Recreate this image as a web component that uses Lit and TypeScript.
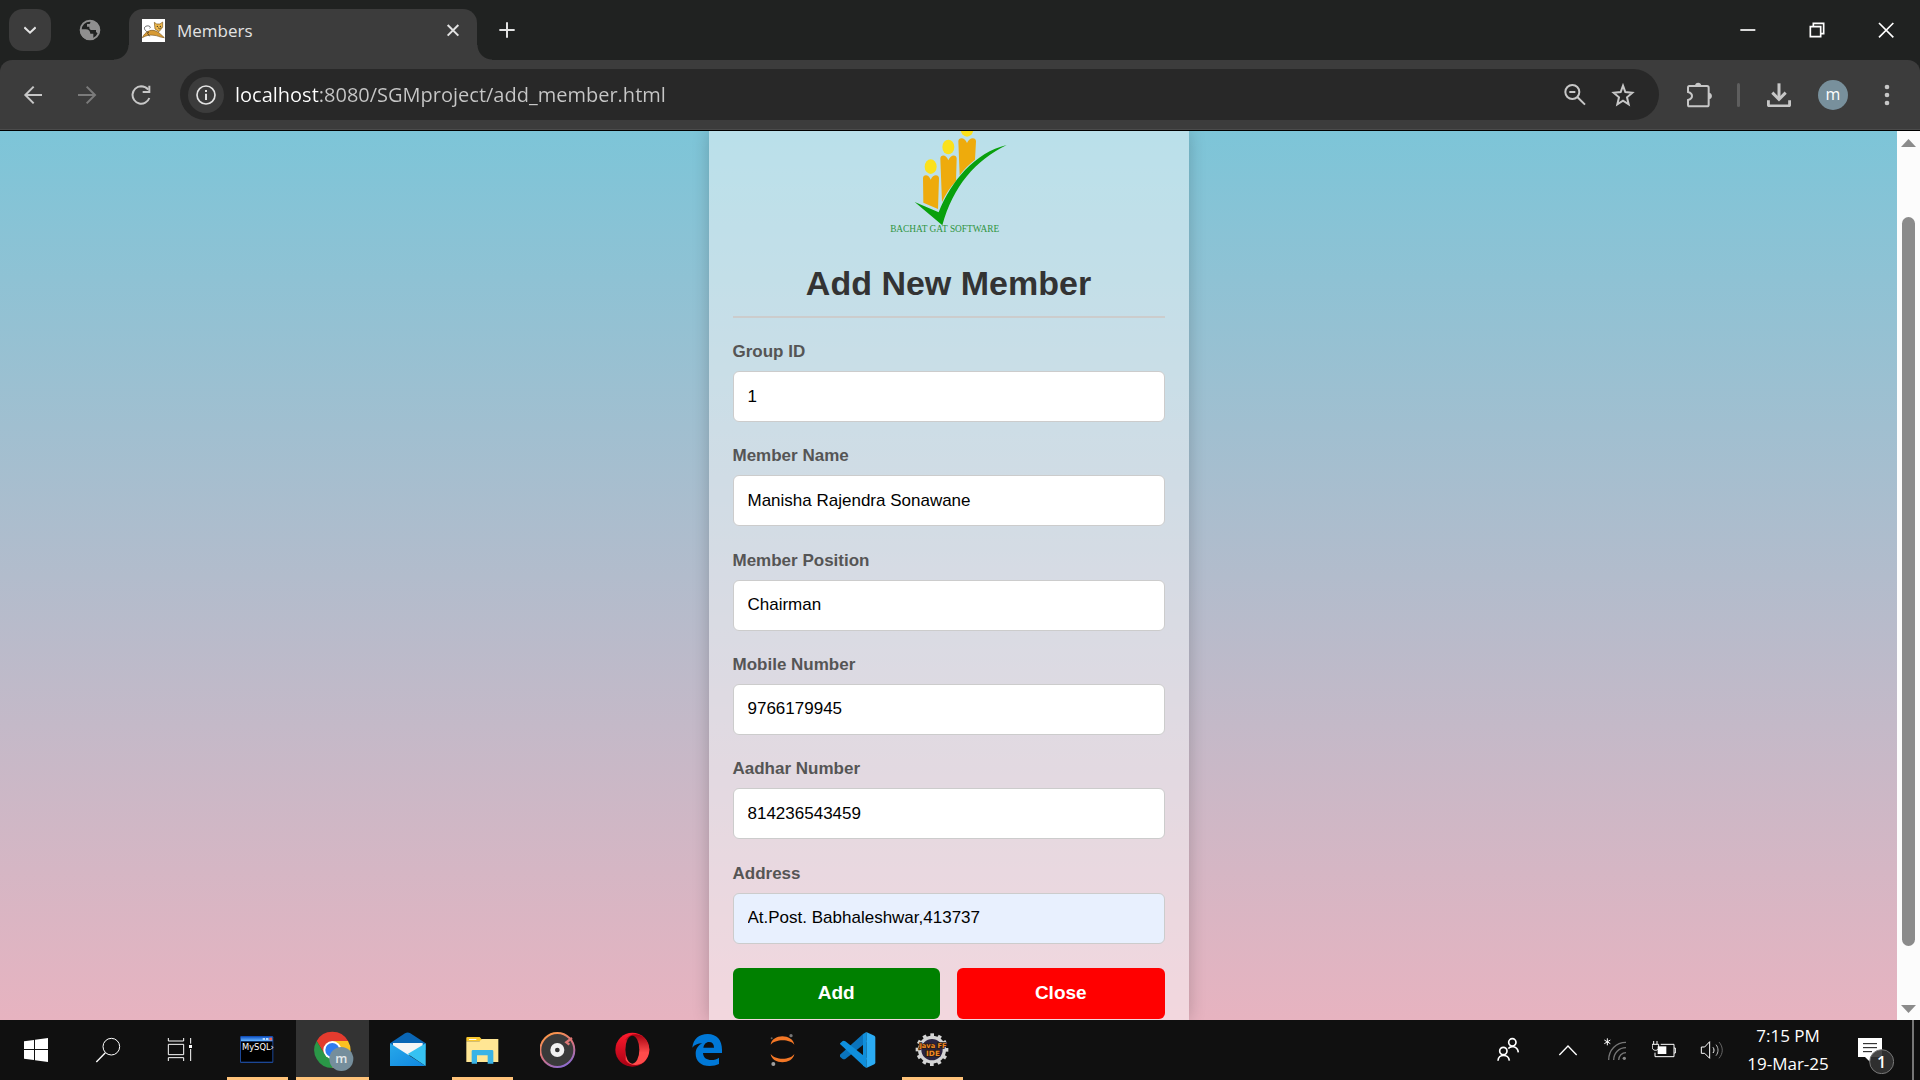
import { LitElement, html, css, svg, nothing, TemplateResult, SVGTemplateResult } from "lit";
import { customElement, state } from "lit/decorators.js";

/** Icons are drawn on a grid with three units to the pixel. */
const icon = (x: number, y: number, w: number, h: number, body: SVGTemplateResult) => html`
  <svg class="icon" width=${w} height=${h} viewBox="${x} ${y} ${w * 3} ${h * 3}" aria-hidden="true">${body}</svg>
`;

const line = (d: string, width = 5) =>
  svg`<path d=${d} fill="none" stroke="currentColor" stroke-width=${width} />`;

const chrome = {
  search: icon(72, 72, 12, 12, line("M73 82L90 98L107 82", 6)),
  globe: icon(228, 57, 22, 22, svg`
    <circle cx="261" cy="90" r="28" fill="none" stroke="currentColor" stroke-width="6" />
    <path fill="currentColor" d="M231 88H248C257 88 262 94 262 101H271V112C271 116 264 119 255 120C242 117 231 106 231 88Z" />
    <path fill="currentColor" d="M262 61C280 62 291 76 291 92L287 103L279 96V90H268C262 90 259 87 259 83V80H252V72H259C263 72 262 66 262 61Z" />`),
  cat: icon(411, 57, 23, 23, svg`
    <rect x="411" y="57" width="69" height="69" fill="#fff" />
    <path fill="#d79a34" stroke="#7a5518" stroke-width="2" d="M412 113C420 96 434 88 450 92C462 96 470 106 478 113C464 112 456 106 447 106C433 104 424 106 412 113Z" />
    <path fill="#efb94d" stroke="#7a5518" stroke-width="2" d="M448 67L455 72H465L473 66V82L462 95L450 87Z" />
    <path fill="none" stroke="#222" stroke-width="2" d="M432 98C420 94 414 84 422 79C430 75 440 80 434 85M427 99L434 109M459 83L464 87L469 82" />
    <circle cx="457" cy="79" r="2" fill="#222" /><circle cx="466" cy="79" r="2" fill="#222" />`),
  close: icon(1294, 69, 14, 14, line("M1299 75L1331 107M1331 75L1299 107", 6)),
  plus: icon(1448, 66, 16, 16, line("M1472 67V113M1449 90H1495", 6)),
  minimize: icon(659, 63, 16, 16, line("M660 87H705", 5)),
  restore: icon(865, 64, 16, 16, line("M869 78H900V108H869ZM878 78V68H909V99H900", 5)),
  exit: icon(1072, 64, 16, 16, line("M1075 67L1118 110M1118 67L1075 110", 5)),
  back: icon(69, 255, 20, 20, line("M126 285H76M101 260L76 285L101 310", 6)),
  forward: icon(231, 255, 20, 20, line("M234 285H285M260 260L285 285L260 310", 6)),
  reload: icon(393, 255, 20, 20, svg`
    ${line("M445 269C439 262 432 259 423 259A26 26 0 1 0 448 294", 6)}
    ${line("M448 257V276H428", 6)}`),
  info: icon(588, 255, 20, 20, svg`
    <circle cx="618" cy="285" r="27" fill="none" stroke="currentColor" stroke-width="5" />
    ${line("M618 281V300M618 270V276", 6)}`),
  zoomOut: icon(131, 252, 22, 22, svg`
    <circle cx="156" cy="276" r="21" fill="none" stroke="currentColor" stroke-width="6" />
    ${line("M171 291L194 314M147 276H165", 6)}`),
  star: icon(273, 249, 24, 24, line("M309 257L316 276L337 278L321 292L326 313L309 302L292 313L297 292L281 278L302 276Z", 6)),
  puzzle: icon(503, 243, 26, 26, svg`
    ${line("M510 255H563Q568 255 568 260V311Q568 316 563 316H510Q506 316 506 311V297C513 295 518 291 518 285S513 275 506 273V260Q506 255 510 255Z", 6)}
    <path fill="currentColor" d="M527 255C527 242 546 242 546 255ZM568 275C581 275 581 295 568 295Z" />`),
  download: icon(741, 248, 24, 24, svg`
    ${line("M777 249V296", 9)}
    ${line("M757 277L777 297L797 277", 9)}
    ${line("M745 300V312Q745 317 750 317H804Q809 317 809 312V300", 9)}`),
  dots: icon(1092, 252, 6, 22, svg`
    <g fill="currentColor"><circle cx="1101" cy="261" r="7" /><circle cx="1101" cy="285" r="7" /><circle cx="1101" cy="309" r="7" /></g>`),
};

const cog = Array.from({ length: 12 }, (_, i) =>
  svg`<rect x="599" y="70" width="11" height="14" fill="#d4d4d4" transform="rotate(${i * 30} 604 119)" />`);

const tasks = {
  start: icon(54, 96, 36, 36, svg`
    <path fill="#fff" d="M72 124L102 120V147H72ZM105 119L144 114V147H105ZM105 150H144V186L105 181ZM72 150H102V180L72 176Z" />`),
  search: icon(270, 96, 36, 36, svg`
    <circle cx="334" cy="140" r="25" fill="none" stroke="#fff" stroke-width="3" />
    <path stroke="#fff" stroke-width="4" d="M316 158L289 186" />`),
  view: icon(486, 96, 36, 36, svg`
    <path fill="none" stroke="#fff" stroke-width="3" d="M505 114V123H551V114M505 133H551V164H505ZM505 183V173H551V183M572 114V131M572 147V183" />
    <rect x="567" y="135" width="9" height="9" fill="#fff" />`),
  mysql: icon(719, 96, 36, 36, svg`
    <defs><linearGradient id="bar" x2="0" y2="1"><stop offset="0" stop-color="#0b4fc4" /><stop offset="1" stop-color="#6ab8ff" /></linearGradient></defs>
    <rect x="719" y="108" width="100" height="81" rx="4" fill="#1c4796" />
    <rect x="722" y="109" width="94" height="14" fill="url(#bar)" />
    <path fill="#b9dcff" d="M787 114H794V120H787ZM797 114H804V120H797Z" /><rect x="807" y="113" width="8" height="8" fill="#ee6352" />
    <rect x="722" y="125" width="94" height="60" fill="#000" />
    <text x="725" y="150" fill="#fff" font-family="DejaVu Sans, sans-serif" font-size="25">MySQL›</text>`),
  chrome: icon(935, 87, 42, 42, svg`
    <path fill="#e33b2e" d="M1043 123A54 54 0 0 0 949 123L973 163L996 123Z" />
    <path fill="#2a9747" d="M949 123A54 54 0 0 0 996 204L1019 163H973Z" />
    <path fill="#fbc120" d="M996 204A54 54 0 0 0 1043 123H996L1019 163Z" />
    <circle cx="996" cy="150" r="27" fill="#fff" /><circle cx="996" cy="150" r="21" fill="#2f7cf0" />
    <circle cx="1023" cy="177" r="36" fill="#758e9c" />
    <text x="1023" y="188" text-anchor="middle" fill="#e3e8eb" font-family="Open Sans, sans-serif" font-weight="600" font-size="38">m</text>`),
  mail: icon(1168, 96, 36, 36, svg`
    <defs><linearGradient id="env" x2="1" y2="1"><stop offset="0" stop-color="#28a9ea" /><stop offset="1" stop-color="#0f86df" /></linearGradient></defs>
    <path fill="#0a66b5" d="M1168 130L1213 100Q1221 95 1229 100L1275 130V150H1168Z" />
    <path fill="#f5f5f5" d="M1177 129H1266V150L1221 168L1177 145Z" />
    <path fill="url(#env)" d="M1168 130L1275 198H1168Z" />
    <path fill="#36c2f2" d="M1275 130V198L1221 162Z" />`),
  files: icon(74, 66, 36, 36, svg`
    <path fill="#f9c830" d="M78 84Q78 81 81 81H118L124 88V94H78Z" />
    <path fill="#fff" d="M86 87H108V90H86Z" />
    <path fill="#ffe694" d="M78 94H118L124 87H174V156H78Z" />
    <path fill="#39b3e6" d="M94 124Q94 120 98 120H155Q159 120 159 124V161H142V136H110V161H94Z" />`),
  groove: icon(299, 66, 36, 36, svg`
    <defs><linearGradient id="ring" x1="0.2" y1="0" x2="0.7" y2="1"><stop offset="0" stop-color="#ff9a45" /><stop offset="0.5" stop-color="#d9737c" /><stop offset="1" stop-color="#8b6bd0" /></linearGradient></defs>
    <circle cx="351" cy="120" r="51" fill="#3a3a3a" stroke="url(#ring)" stroke-width="6" />
    <path fill="none" stroke="#dd7775" stroke-width="7" d="M395 84L378 97L387 104" />
    <circle cx="351" cy="120" r="21" fill="#f1f1f1" /><circle cx="351" cy="120" r="7" fill="#333" />`),
  opera: icon(524, 66, 36, 36, svg`
    <defs>
      <linearGradient id="op1" x2="0" y2="1"><stop offset="0" stop-color="#ff1b2d" /><stop offset="1" stop-color="#a70014" /></linearGradient>
      <linearGradient id="op2" x2="0" y2="1"><stop offset="0" stop-color="#a3000f" /><stop offset="0.6" stop-color="#ff4b4b" /></linearGradient>
    </defs>
    <circle cx="576" cy="119" r="51" fill="url(#op1)" />
    <path fill="url(#op2)" d="M556 88C566 72 590 66 610 81A51 51 0 0 1 610 157C590 171 566 166 556 150Z" />
    <ellipse cx="576" cy="119" rx="21" ry="42" fill="#101010" />`),
  edge: icon(750, 66, 36, 36, svg`
    <path fill="#0078d7" d="M757 113C760 87 777 72 803 72C831 72 846 91 846 119V129H789C790 144 801 150 814 150C823 150 831 148 837 143V162C829 166 820 168 809 168C782 168 767 152 767 131C767 117 774 106 787 100C773 100 763 105 757 113ZM790 113H822C822 102 817 96 807 96C798 96 792 103 790 113Z" />`),
  jupyter: icon(104, 66, 36, 36, svg`
    <path fill="#f37726" d="M121 104C125 70 187 70 192 104C180 86 134 86 121 104ZM121 132C125 165 187 165 192 132C180 151 134 151 121 132Z" />
    <circle cx="182" cy="77" r="5" fill="#767677" /><circle cx="129" cy="162" r="6" fill="#9e9e9e" /><circle cx="124" cy="85" r="3" fill="#616262" />`),
  code: icon(329, 66, 36, 36, svg`
    <path fill="#0a74bd" d="M328 135L398 72L410 95L345 147Q340 149 336 146L328 139Z" />
    <path fill="#0f8fdc" d="M328 101L336 94Q340 91 345 94L410 145L400 168Z" />
    <path fill="#2bacf4" d="M408 66L432 77Q435 79 435 83V157Q435 161 432 163L408 174Z" />
    <path fill="#0f8fdc" d="M398 72L408 66V174L398 167Z" />`),
  java: icon(553, 66, 36, 36, svg`
    ${cog}
    <circle cx="604" cy="119" r="37" fill="#2a2440" stroke="#d4d4d4" stroke-width="10" />
    <g fill="#f08a24" stroke="#2b1a10" stroke-width="5" paint-order="stroke" font-family="DejaVu Sans, sans-serif" font-weight="bold" text-anchor="middle">
      <text x="607" y="115" font-size="20">Java FF</text><text x="607" y="138" font-size="22">IDE</text>
    </g>`),
};

const tray = {
  people: icon(48, 111, 24, 26, svg`
    <g fill="none" stroke="#fff" stroke-width="5">
      <circle cx="97" cy="127" r="11" /><circle cx="70" cy="153" r="11" />
      <path d="M85 146C90 137 112 136 115 157M54 182C55 161 86 161 88 182" />
    </g>`),
  up: icon(234, 126, 20, 14, svg`<path fill="none" stroke="#fff" stroke-width="4" d="M238 162L264 135L290 162" />`),
  wifi: icon(372, 114, 24, 24, svg`
    <path stroke="#fff" stroke-width="3" d="M382 115V136M373 120L391 131M391 120L373 131" />
    <g fill="none" stroke="#777" stroke-width="4"><path d="M386 180C386 150 408 127 438 127M401 180C401 159 417 143 438 143M416 180C416 168 426 158 438 158" /></g>
    <circle cx="433" cy="175" r="5" fill="#888" />`),
  battery: icon(517, 120, 25, 20, svg`
    <path fill="none" stroke="#fff" stroke-width="3" d="M543 133H583V170H526V158M583 144H587V159H583M522 123V132M532 123V132M517 133H537V142C537 154 518 154 518 142Z" />
    <rect x="534" y="139" width="26" height="23" fill="#fff" />`),
  volume: icon(660, 120, 24, 21, svg`
    <path fill="none" stroke="#fff" stroke-width="3" d="M664 141H674L689 125V175L674 160H664ZM699 142C703 147 703 154 699 159" />
    <path fill="none" stroke="#bbb" stroke-width="3" d="M708 134C716 144 716 157 708 167" />
    <path fill="none" stroke="#666" stroke-width="3" d="M717 126C730 141 730 160 717 175" />`),
  notes: icon(1134, 114, 36, 36, svg`
    <path fill="#fff" d="M1134 114H1206V171H1171V187L1155 171H1134Z" />
    <path stroke="#101010" stroke-width="3" d="M1149 131H1191M1149 143H1191M1149 155H1176" />
    <circle cx="1205" cy="185" r="36" fill="#333" fill-opacity="0.9" stroke="#777" stroke-width="3" />
    <text x="1205" y="203" text-anchor="middle" fill="#fff" font-family="Open Sans, sans-serif" font-weight="600" font-size="48">1</text>`),
};

const logo = html`
  <svg class="logo" width="140" height="104" viewBox="57 18 420 312" role="img" aria-label="Bachat Gat Software">
    <g fill="#fbe11c">
      <ellipse cx="212" cy="125" rx="18" ry="22" />
      <ellipse cx="265" cy="66" rx="18" ry="22" />
      <ellipse cx="321" cy="13" rx="19" ry="22" />
    </g>
    <g fill="#eeab0c">
      <path d="M189 160C189 148 206 146 212 164C219 146 237 148 237 160L234 252L190 233Z" />
      <path d="M241 101C241 88 259 87 265 106C272 87 290 88 290 101L288 168C271 187 257 207 246 231Z" />
      <path d="M295 49C295 36 315 35 321 54C328 35 348 36 348 49L345 104C328 117 312 133 299 151Z" />
    </g>
    <path fill="#08a00c" d="M164 231L236 262C273 168 345 83 440 60C347 105 279 184 247 301Z" />
    <text x="254" y="322" text-anchor="middle" fill="#2f9440" font-family="Liberation Serif, serif" font-size="28">BACHAT GAT SOFTWARE</text>
  </svg>
`;

interface Field { id: string; label: string; value: string; filled?: boolean }
interface Task { name: string; art: TemplateResult; mode?: "open" | "active" }

@customElement("app-root")
export class AppRoot extends LitElement {
  @state() private fields: Field[] = [
    { id: "group", label: "Group ID", value: "1" },
    { id: "name", label: "Member Name", value: "Manisha Rajendra Sonawane" },
    { id: "position", label: "Member Position", value: "Chairman" },
    { id: "mobile", label: "Mobile Number", value: "9766179945" },
    { id: "aadhar", label: "Aadhar Number", value: "814236543459" },
    { id: "address", label: "Address", value: "At.Post. Babhaleshwar,413737", filled: true },
  ];

  private apps: Task[] = [
    { name: "MySQL", art: tasks.mysql, mode: "open" },
    { name: "Chrome", art: tasks.chrome, mode: "active" },
    { name: "Mail", art: tasks.mail },
    { name: "File Explorer", art: tasks.files, mode: "open" },
    { name: "Groove Music", art: tasks.groove },
    { name: "Opera", art: tasks.opera },
    { name: "Edge", art: tasks.edge },
    { name: "Jupyter", art: tasks.jupyter },
    { name: "Visual Studio Code", art: tasks.code },
    { name: "Java IDE", art: tasks.java, mode: "open" },
  ];

  static styles = css`
    :host {
      display: flex;
      flex-direction: column;
      height: 100vh;
      overflow: hidden;
      font-family: "Open Sans", "Noto Sans", sans-serif;
      background: #202221;
    }
    * { box-sizing: border-box; }
    button, input { font: inherit; margin: 0; border: 0; }
    button { display: flex; align-items: center; justify-content: center; padding: 0; background: none; color: inherit; }
    .icon { display: block; flex: none; }

    .tabs { display: flex; align-items: stretch; height: 60px; padding-left: 9px; color: #e3e3e3; flex: none; }
    .tab-search { width: 42px; height: 42px; margin-top: 9px; border-radius: 14px; background: #3c3c3c; }
    .tab-idle { width: 78px; color: #8f8f8f; }
    .tab {
      position: relative;
      display: flex;
      align-items: center;
      width: 348px;
      margin-top: 9px;
      padding: 0 14px 9px 13px;
      border-radius: 14px 14px 0 0;
      background: #3c3c3c;
    }
    .tab::before, .tab::after {
      content: "";
      position: absolute;
      bottom: 0;
      width: 15px;
      height: 15px;
    }
    .tab::before { right: 100%; background: radial-gradient(circle at 0 0, transparent 14px, #3c3c3c 15px); }
    .tab::after { left: 100%; background: radial-gradient(circle at 100% 0, transparent 14px, #3c3c3c 15px); }
    .tab-title { flex: 1; padding: 2px 0 0 12px; font-size: 17px; line-height: 22px; }
    .tab-close { width: 20px; height: 20px; }
    .tab-new { width: 60px; }
    .window { display: flex; margin-left: auto; color: #fff; padding-bottom: 1px; }
    .window button { width: 69px; }

    .toolbar {
      display: flex;
      align-items: center;
      height: 71px;
      flex: none;
      padding: 0 7px 1px 6px;
      border-bottom: 1px solid #000;
      border-radius: 12px 12px 0 0;
      box-shadow: inset 0 -1px #4b4b4b;
      background: #3c3c3c;
      color: #c7c7c7;
    }
    .nav { width: 54px; height: 52px; }
    .nav.off { color: #7b7b7b; }
    .omnibox {
      display: flex;
      align-items: center;
      flex: 1;
      height: 51px;
      margin: 0 15px 0 12px;
      padding: 0 12px 0 8px;
      border-radius: 26px;
      background: #282828;
    }
    .site { width: 36px; height: 36px; border-radius: 50%; background: #3c3c3c; color: #e3e3e3; }
    .url {
      flex: 1;
      min-width: 0;
      padding: 0 0 0 11px;
      outline: 0;
      font-size: 20px;
      line-height: 28px;
      color: transparent;
      caret-color: #fff;
      background: linear-gradient(90deg, #fff 96px, #c7c7c7 96px);
      -webkit-background-clip: text;
      background-clip: text;
    }
    .omni-act { width: 48px; height: 48px; }
    .ext { width: 52px; height: 52px; }
    .rule { width: 3px; height: 24px; margin: 0 13px 0 11px; border-radius: 2px; background: #5e5e5e; }
    .profile { width: 56px; height: 52px; }
    .avatar { width: 30px; height: 30px; border-radius: 50%; background: #78909c; color: #fff; font-size: 16px; line-height: 28px; }
    .menu { width: 52px; height: 52px; }

    .view { display: flex; flex: 1; min-height: 0; }
    .page {
      flex: 1;
      display: flex;
      justify-content: center;
      overflow: hidden;
      font-family: "Liberation Sans", Arial, sans-serif;
      background: linear-gradient(#7dc5d8, #e7b3c0);
    }
    .card {
      display: flex;
      flex-direction: column;
      width: 480px;
      padding: 0 24px 1px;
      background: rgba(255, 255, 255, 0.47);
      box-shadow: 0 0 16px rgba(0, 0, 0, 0.2);
    }
    .logo { display: block; flex: none; align-self: center; margin-bottom: 30px; }
    h1 {
      margin: 0 0 24px;
      padding-bottom: 14px;
      border-bottom: 2px solid #ccc;
      font-size: 34px;
      line-height: 37px;
      text-align: center;
      color: #333;
    }
    form { flex: 1; display: flex; flex-direction: column; justify-content: space-between; }
    .field { display: flex; flex-direction: column; gap: 10px; }
    label { font-size: 17px; line-height: 19px; font-weight: bold; color: #555; }
    .entry {
      height: 51px;
      padding: 0 14px;
      border: 1px solid #ccc;
      border-radius: 6px;
      background: #fff;
      color: #000;
      font-size: 17px;
    }
    .entry.filled { background: #e8f0fe; }
    .actions { display: grid; grid-template-columns: 1fr 1fr; gap: 17px; }
    .action { height: 51px; border-radius: 6px; color: #fff; font-size: 19px; font-weight: bold; background: #008000; }
    .action.stop { background: #f00; }

    .scroll { display: flex; flex-direction: column; align-items: center; width: 23px; padding: 8px 0 7px; background: #fcfcfc; }
    .arrow { width: 15px; height: 8px; background: #8b8b8b; clip-path: polygon(50% 0, 100% 100%, 0 100%); }
    .arrow.down { clip-path: polygon(0 0, 100% 0, 50% 100%); }
    .track { flex: 1; width: 13px; padding: 70px 0 59px; display: flex; }
    .thumb { flex: 1; border-radius: 7px; background: #8b8b8b; }

    .taskbar { display: flex; height: 60px; flex: none; background: #101010; color: #fff; }
    .sys { width: 72px; }
    .apps { display: flex; gap: 2px; margin-left: 5px; }
    .app { position: relative; width: 73px; }
    .app.active { background: #333; }
    .app.open::after, .app.active::after {
      content: "";
      position: absolute;
      bottom: 0;
      left: 6px;
      right: 6px;
      height: 3px;
      background: #ffc37a;
    }
    .app.active::after { left: 0; right: 0; }
    .tray { display: flex; margin-left: auto; padding-right: 6px; }
    .tray button { width: 48px; }
    .tray .people { width: 56px; margin-right: 8px; }
    .tray .clock { flex-direction: column; width: 104px; font-size: 17px; line-height: 28px; }
    .tray .notes { width: 72px; padding-top: 12px; border-right: 2px solid #777; box-sizing: content-box; }
  `;

  private edit(index: number, event: Event) {
    const value = (event.target as HTMLInputElement).value;
    this.fields = this.fields.map((f, i) => (i === index ? { ...f, value } : f));
  }

  private renderBrowser() {
    return html`
      <header class="tabs">
        <button class="tab-search" aria-label="Search tabs">${chrome.search}</button>
        <button class="tab-idle" aria-label="Background tab">${chrome.globe}</button>
        <div class="tab">
          ${chrome.cat}
          <span class="tab-title">Members</span>
          <button class="tab-close" aria-label="Close tab">${chrome.close}</button>
        </div>
        <button class="tab-new" aria-label="New tab">${chrome.plus}</button>
        <div class="window">
          <button aria-label="Minimize">${chrome.minimize}</button>
          <button aria-label="Restore">${chrome.restore}</button>
          <button aria-label="Close window">${chrome.exit}</button>
        </div>
      </header>
      <nav class="toolbar">
        <button class="nav" aria-label="Back">${chrome.back}</button>
        <button class="nav off" aria-label="Forward">${chrome.forward}</button>
        <button class="nav" aria-label="Reload">${chrome.reload}</button>
        <div class="omnibox">
          <button class="site" aria-label="Site information">${chrome.info}</button>
          <input class="url" aria-label="Address bar" .value=${"localhost:8080/SGMproject/add_member.html"} />
          <button class="omni-act" aria-label="Zoom">${chrome.zoomOut}</button>
          <button class="omni-act" aria-label="Bookmark">${chrome.star}</button>
        </div>
        <button class="ext" aria-label="Extensions">${chrome.puzzle}</button>
        <span class="rule"></span>
        <button class="ext" aria-label="Downloads">${chrome.download}</button>
        <button class="profile" aria-label="Profile"><span class="avatar">m</span></button>
        <button class="menu" aria-label="Menu">${chrome.dots}</button>
      </nav>
    `;
  }

  private renderPage() {
    return html`
      <div class="view">
        <main class="page">
          <section class="card">
            ${logo}
            <h1>Add New Member</h1>
            <form @submit=${(e: Event) => e.preventDefault()}>
              ${this.fields.map((f, i) => html`
                <div class="field">
                  <label for=${f.id}>${f.label}</label>
                  <input class="entry ${f.filled ? "filled" : ""}" id=${f.id} type="text" .value=${f.value}
                    @input=${(e: Event) => this.edit(i, e)} />
                </div>
              `)}
              <div class="actions">
                <button class="action" type="submit">Add</button>
                <button class="action stop" type="button">Close</button>
              </div>
            </form>
          </section>
        </main>
        <div class="scroll">
          <span class="arrow"></span>
          <div class="track"><span class="thumb"></span></div>
          <span class="arrow down"></span>
        </div>
      </div>
    `;
  }

  private renderTaskbar() {
    return html`
      <footer class="taskbar">
        <button class="sys" aria-label="Start">${tasks.start}</button>
        <button class="sys" aria-label="Search">${tasks.search}</button>
        <button class="sys" aria-label="Task view">${tasks.view}</button>
        <div class="apps">
          ${this.apps.map((a) => html`
            <button class="app ${a.mode ?? ""}" aria-label=${a.name} aria-current=${a.mode === "active" ? "true" : nothing}>${a.art}</button>
          `)}
        </div>
        <div class="tray">
          <button class="people" aria-label="People">${tray.people}</button>
          <button aria-label="Show hidden icons">${tray.up}</button>
          <button aria-label="Network">${tray.wifi}</button>
          <button aria-label="Battery">${tray.battery}</button>
          <button aria-label="Volume">${tray.volume}</button>
          <button class="clock"><span>7:15 PM</span><span>19-Mar-25</span></button>
          <button class="notes" aria-label="Notifications">${tray.notes}</button>
        </div>
      </footer>
    `;
  }

  render() {
    return html`${this.renderBrowser()}${this.renderPage()}${this.renderTaskbar()}`;
  }
}
